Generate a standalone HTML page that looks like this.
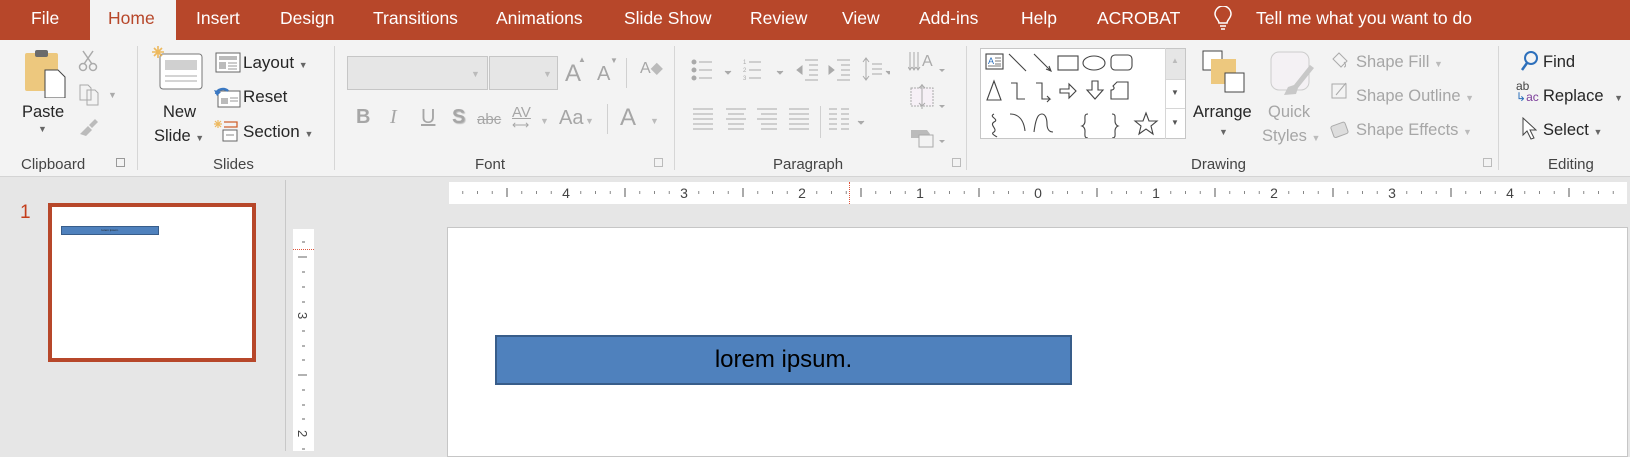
<!DOCTYPE html>
<html><head><meta charset="utf-8">
<style>
*{margin:0;padding:0;box-sizing:border-box}
body{width:1630px;height:451px;overflow:hidden;background:#e6e6e6;font-family:"Liberation Sans",sans-serif;position:relative}
.a{position:absolute;white-space:nowrap}
.tab{position:absolute;top:0;height:40px;line-height:36px;color:#fff;font-size:17.5px}
.t{position:absolute;font-size:16.5px;color:#262626;white-space:nowrap;line-height:18px}
.g{color:#a6a6a6}
.lbl{position:absolute;top:156px;font-size:15px;color:#444;white-space:nowrap}
.sep{position:absolute;top:46px;width:1px;height:124px;background:#d6d6d6}
.ar{font-size:9px;color:#666}
</style></head><body>
<!-- tab bar -->
<div class="a" style="left:0;top:0;width:1630px;height:40px;background:#b7472a"></div>
<div class="a" style="left:90px;top:0;width:86px;height:41px;background:#f3f3f3"></div>
<div class="tab" style="left:31px">File</div>
<div class="tab" style="left:108px;color:#b7472a">Home</div>
<div class="tab" style="left:196px">Insert</div>
<div class="tab" style="left:280px">Design</div>
<div class="tab" style="left:373px">Transitions</div>
<div class="tab" style="left:496px">Animations</div>
<div class="tab" style="left:624px">Slide Show</div>
<div class="tab" style="left:750px">Review</div>
<div class="tab" style="left:842px">View</div>
<div class="tab" style="left:919px">Add-ins</div>
<div class="tab" style="left:1021px">Help</div>
<div class="tab" style="left:1097px">ACROBAT</div>
<svg class="a" style="left:1214px;top:6px" width="18" height="26" viewBox="0 0 18 26"><path d="M5 17c0-3-4-5-4-9a8 8 0 0 1 16 0c0 4-4 6-4 9z M6 20h6 M7 23h4" fill="none" stroke="#fff" stroke-width="1.5"/></svg>
<div class="tab" style="left:1256px">Tell me what you want to do</div>

<!-- ribbon -->
<div class="a" style="left:0;top:40px;width:1630px;height:137px;background:#f3f3f3;border-bottom:1px solid #d4d4d4"></div>
<div class="sep" style="left:137px"></div>
<div class="sep" style="left:334px"></div>
<div class="sep" style="left:674px"></div>
<div class="sep" style="left:966px"></div>
<div class="sep" style="left:1498px"></div>

<!-- clipboard -->
<svg class="a" style="left:24px;top:48px" width="44" height="50"><rect x="1" y="5" width="33" height="38" rx="2" fill="#edc87e"/><rect x="11" y="2" width="13" height="7" rx="2" fill="#6b6b6b"/><path d="M21 22h13l7 7v21H21z" fill="#fff" stroke="#444"/></svg>
<div class="t" style="left:22px;top:103px">Paste</div>
<div class="a ar" style="left:38px;top:124px">▼</div>
<svg class="a" style="left:78px;top:50px" width="20" height="22"><circle cx="5" cy="17" r="3.5" fill="none" stroke="#aaa" stroke-width="1.5"/><circle cx="15" cy="17" r="3.5" fill="none" stroke="#aaa" stroke-width="1.5"/><path d="M6 14L15 1M14 14L5 1" stroke="#aaa" stroke-width="1.5"/></svg>
<svg class="a" style="left:79px;top:84px" width="22" height="22"><path d="M1 1h8l3 3v12H1z M8 6h8l3 3v12H8z" fill="#f3f3f3" stroke="#aaa"/></svg>
<div class="a ar" style="left:108px;top:90px;color:#aaa">▼</div>
<svg class="a" style="left:78px;top:118px" width="22" height="18"><path d="M2 16l8-8 4 4-6 6z M11 7l6-6 3 3-6 6z" fill="#bbb"/></svg>
<div class="lbl" style="left:21px">Clipboard</div>
<div class="a" style="left:116px;top:158px;width:9px;height:9px;border:1px solid #999"></div>

<!-- slides -->
<svg class="a" style="left:152px;top:46px" width="52" height="46"><rect x="8" y="8" width="42" height="35" rx="3" fill="#fff" stroke="#777"/><rect x="13" y="14" width="32" height="10" fill="#d0d0d0"/><path d="M13 30h32M13 35h32" stroke="#aaa"/><path d="M6 0v12M0 6h12M2 2l8 8M10 2l-8 8" stroke="#edb95e" stroke-width="1.6"/></svg>
<div class="t" style="left:163px;top:103px">New</div>
<div class="t" style="left:154px;top:127px">Slide <span class="ar">▼</span></div>
<svg class="a" style="left:215px;top:52px" width="26" height="21"><rect x="1" y="1" width="24" height="19" fill="#fff" stroke="#666"/><rect x="4" y="4" width="18" height="4" fill="#bbb"/><rect x="4" y="10" width="7" height="7" fill="#bbb"/><path d="M13 11h9M13 14h9M13 17h9" stroke="#999"/></svg>
<div class="t" style="left:243px;top:54px;font-size:17px">Layout <span class="ar">▼</span></div>
<svg class="a" style="left:214px;top:86px" width="28" height="22"><rect x="4" y="5" width="22" height="16" fill="#fff" stroke="#666"/><rect x="7" y="12" width="7" height="6" fill="#bbb"/><path d="M16 12h8M16 15h8" stroke="#999"/><path d="M2 8a7 6 0 0 1 12-3" fill="none" stroke="#3a78c2" stroke-width="2.5"/><path d="M0 4l3 6 4-4z" fill="#3a78c2"/></svg>
<div class="t" style="left:243px;top:88px;font-size:17px">Reset</div>
<svg class="a" style="left:214px;top:119px" width="28" height="24"><path d="M4 1v8M0 5h8M1 2l6 6M7 2L1 8" stroke="#edb95e" stroke-width="1.2"/><path d="M10 3h13v5H10" fill="none" stroke="#d0612d" stroke-width="1.3"/><rect x="9" y="11" width="14" height="11" fill="#fff" stroke="#666"/><path d="M12 16h8" stroke="#888"/></svg>
<div class="t" style="left:243px;top:123px;font-size:17px">Section <span class="ar">▼</span></div>
<div class="lbl" style="left:213px">Slides</div>

<!-- font -->
<div class="a" style="left:347px;top:56px;width:141px;height:34px;background:#e6e6e6;border:1px solid #c6c6c6"></div>
<div class="a" style="left:489px;top:56px;width:69px;height:34px;background:#e6e6e6;border:1px solid #c6c6c6"></div>
<div class="a ar" style="left:471px;top:69px;color:#bbb">▼</div>
<div class="a ar" style="left:543px;top:69px;color:#bbb">▼</div>
<div class="a g" style="left:565px;top:60px;font-size:24px">A</div><div class="a g" style="left:578px;top:55px;font-size:8px">▲</div>
<div class="a g" style="left:597px;top:63px;font-size:20px">A</div><div class="a g" style="left:610px;top:56px;font-size:8px">▼</div>
<div class="a" style="left:626px;top:58px;width:1px;height:30px;background:#d0d0d0"></div>
<div class="a g" style="left:640px;top:58px;font-size:16px">A<span style="color:#bbb">◆</span></div>
<div class="a g" style="left:356px;top:106px;font-size:20px;font-weight:bold">B</div>
<div class="a g" style="left:390px;top:106px;font-size:20px;font-style:italic;font-family:'Liberation Serif',serif">I</div>
<div class="a g" style="left:421px;top:106px;font-size:20px;text-decoration:underline">U</div>
<div class="a g" style="left:452px;top:106px;font-size:20px;font-weight:bold;text-shadow:1px 1px 1px #bbb">S</div>
<div class="a g" style="left:477px;top:111px;font-size:15px;text-decoration:line-through">abc</div>
<div class="a g" style="left:512px;top:104px;font-size:15px;text-decoration:underline">AV</div><div class="a g" style="left:512px;top:118px;font-size:12px">⟷</div>
<div class="a ar" style="left:540px;top:116px;color:#bbb">▼</div>
<div class="a g" style="left:559px;top:107px;font-size:20px">Aa</div><div class="a ar" style="left:585px;top:116px;color:#bbb">▼</div>
<div class="a" style="left:607px;top:104px;width:1px;height:30px;background:#d0d0d0"></div>
<div class="a g" style="left:620px;top:104px;font-size:24px">A</div><div class="a ar" style="left:650px;top:116px;color:#bbb">▼</div>
<div class="lbl" style="left:475px">Font</div>
<div class="a" style="left:654px;top:158px;width:9px;height:9px;border:1px solid #bbb"></div>

<!-- paragraph -->
<svg class="a" style="left:690px;top:56px" width="200" height="90" stroke="#aaa" fill="none">
<g><circle cx="4" cy="6" r="2" fill="#aaa"/><circle cx="4" cy="14" r="2" fill="#aaa"/><circle cx="4" cy="22" r="2" fill="#aaa"/><path d="M9 6h13M9 14h13M9 22h13"/></g>
<path d="M35 15l3 3 3-3" fill="#aaa"/>
<g transform="translate(53 0)" font-size="6" font-family="Liberation Sans"><text x="0" y="8" fill="#aaa" stroke="none">1</text><text x="0" y="16" fill="#aaa" stroke="none">2</text><text x="0" y="24" fill="#aaa" stroke="none">3</text><path d="M6 6h12M6 14h12M6 22h12"/></g>
<path d="M87 15l3 3 3-3" fill="#aaa"/>
<g transform="translate(107 2)"><path d="M8 2h13M12 7h9M12 12h9M12 17h9M8 22h13M0 12l5-4v8z" fill="#aaa"/></g>
<g transform="translate(139 2)"><path d="M8 2h13M12 7h9M12 12h9M12 17h9M8 22h13M0 8l5 4-5 4z" fill="#aaa"/></g>
<g transform="translate(172 0)"><path d="M4 3v20M1 6l3-4 3 4M1 20l3 4 3-4M10 8h10M10 13h10M10 18h10"/></g>
<path d="M196 15l3 3 3-3" fill="#aaa"/>
<g transform="translate(0 53)"><path d="M3 0h20M3 5h20M3 10h20M3 15h20M3 20h20"/><path d="M36 0h20M38 5h16M36 10h20M38 15h16M38 20h16"/><path d="M67 0h20M71 5h16M67 10h20M71 15h16M71 20h16"/><path d="M99 0h20M99 5h20M99 10h20M99 15h20M99 20h20"/><path d="M130.5 -3v32" stroke="#d0d0d0"/><path d="M139 0h8M139 5h8M139 10h8M139 15h8M139 20h8M151 0h8M151 5h8M151 10h8M151 15h8M151 20h8"/><path d="M168 12l3 3 3-3" fill="#aaa"/></g>
</svg>
<svg class="a" style="left:908px;top:50px" width="40" height="100" stroke="#aaa" fill="none"><path d="M2 2v18M6 2v18M10 2v18M0 17l2 3 2-3M4 17l2 3 2-3M8 17l2 3 2-3"/><text x="14" y="16" font-size="16" fill="#aaa" stroke="none" font-family="Liberation Sans">A</text><path d="M31 19l3 3 3-3M31 55l3 3 3-3M31 90l3 3 3-3" fill="#aaa" stroke="none"/><rect x="3" y="38" width="22" height="18" fill="#f6f0f6" stroke-dasharray="2 1"/><path d="M14 34v25M11 38l3-3 3 3M11 53l3 3 3-3"/><path d="M3 80h16l3 4-3 4H3z" fill="#bbb" stroke="none"/><rect x="11" y="85" width="14" height="12" fill="#f3f3f3"/></svg>
<div class="lbl" style="left:773px">Paragraph</div>
<div class="a" style="left:952px;top:158px;width:9px;height:9px;border:1px solid #bbb"></div>

<!-- drawing -->
<div class="a" style="left:980px;top:48px;width:206px;height:91px;background:#fff;border:1px solid #c6c6c6"></div>
<div class="a" style="left:1165px;top:48px;width:21px;height:91px;border-left:1px solid #d6d6d6"></div>
<div class="a" style="left:1166px;top:49px;width:19px;height:30px;background:#e6e6e6"></div>
<div class="a" style="left:1166px;top:79px;width:19px;height:1px;background:#d6d6d6"></div>
<div class="a" style="left:1166px;top:108px;width:19px;height:1px;background:#d6d6d6"></div>
<div class="a" style="left:1171px;top:56px;font-size:8px;color:#bbb">▲</div>
<div class="a" style="left:1171px;top:88px;font-size:8px;color:#555">▼</div>
<div class="a" style="left:1171px;top:118px;font-size:8px;color:#555">▼</div>
<svg class="a" style="left:984px;top:52px" width="180" height="86" fill="none" stroke="#444" stroke-width="1.1">
<rect x="2" y="2" width="17" height="15"/><text x="4" y="12" font-size="9" fill="#2c6fbb" stroke="none" font-family="Liberation Sans">A</text><path d="M11 6h6M11 9h6M11 12h6M4 14h13" stroke="#777"/>
<path d="M25 2l17 17M50 2l17 17M65 14l2 5-5-2"/>
<rect x="74" y="4" width="20" height="14"/><ellipse cx="110" cy="11" rx="11" ry="7"/><rect x="127" y="3" width="21" height="15" rx="4"/>
<path d="M10 29L3 48h14z M27 31h6v16h8 M52 31h6v16h8l-3-3m3 3l-3 3 M76 37h9v-5l7 7-7 7v-5h-9z M108 29h6v9h5l-8 9-8-9h5z M129 34l4-4h11v17h-17v-9c3 0 4-2 2-4z"/>
<path d="M10 62c-6 3 6 5 0 8-5 3 4 7 0 10-4 2 2 4 3 5 M26 62c10 0 14 8 15 17 M50 80c2-16 5-18 8-18s5 4 5 10 3 8 6 8 M104 62c-4 0-3 3-3 7s-3 5-3 5c0 0 3 1 3 5s-1 7 3 7 M128 62c4 0 3 3 3 7s3 5 3 5c0 0-3 1-3 5s1 7-3 7 M162 61l3 8h8l-6 5 2 8-7-5-7 5 2-8-6-5h8z"/>
</svg>
<svg class="a" style="left:1202px;top:50px" width="44" height="44"><rect x="1" y="1" width="19" height="19" fill="#fff" stroke="#444"/><rect x="9" y="9" width="25" height="25" fill="#edc87e"/><rect x="23" y="23" width="19" height="19" fill="#fff" stroke="#444"/></svg>
<div class="t" style="left:1193px;top:103px">Arrange</div>
<div class="a ar" style="left:1219px;top:127px">▼</div>
<svg class="a" style="left:1270px;top:51px" width="48" height="46"><rect x="1" y="1" width="38" height="38" rx="8" fill="#f4f1f4" stroke="#ccc"/><path d="M14 44l4-8 6-2 16-20 4 3-16 20-2 6z" fill="#c8c8c8"/></svg>
<div class="t g" style="left:1268px;top:103px">Quick</div>
<div class="t g" style="left:1262px;top:127px">Styles <span class="ar" style="color:#bbb">▼</span></div>
<svg class="a" style="left:1330px;top:50px" width="20" height="90" fill="none" stroke="#aaa"><path d="M3 9l6-6 8 8-6 6z M14 12c2 2 2 5 0 5"/><path d="M2 34h14v14H2z M6 45l10-12" /><rect x="2" y="74" width="15" height="12" rx="2" transform="rotate(-20 9 80)" fill="#ddd"/></svg>
<div class="t g" style="left:1356px;top:53px">Shape Fill <span class="ar" style="color:#bbb">▼</span></div>
<div class="t g" style="left:1356px;top:87px">Shape Outline <span class="ar" style="color:#bbb">▼</span></div>
<div class="t g" style="left:1356px;top:121px">Shape Effects <span class="ar" style="color:#bbb">▼</span></div>
<div class="lbl" style="left:1191px">Drawing</div>
<div class="a" style="left:1483px;top:158px;width:9px;height:9px;border:1px solid #bbb"></div>

<!-- editing -->
<svg class="a" style="left:1520px;top:50px" width="20" height="22"><circle cx="11" cy="8" r="6" fill="none" stroke="#2c6fbb" stroke-width="2"/><path d="M7 13l-5 7" stroke="#2c6fbb" stroke-width="2.5"/></svg>
<div class="t" style="left:1543px;top:53px">Find</div>
<div class="a" style="left:1516px;top:81px;font-size:12px;color:#444;line-height:11px">ab<br><span style="color:#2c6fbb">↳</span><span style="color:#7c3d9a">ac</span></div>
<div class="t" style="left:1543px;top:87px">Replace <span class="ar" style="margin-left:6px">▼</span></div>
<svg class="a" style="left:1521px;top:116px" width="16" height="24"><path d="M2 2v17l4-4 4 8 3-1-4-8h6z" fill="#fff" stroke="#444"/></svg>
<div class="t" style="left:1543px;top:121px">Select <span class="ar">▼</span></div>
<div class="lbl" style="left:1548px">Editing</div>

<!-- left pane -->
<div class="a" style="left:285px;top:180px;width:1px;height:271px;background:#c8c8c8"></div>
<div class="a" style="left:20px;top:202px;font-size:19px;color:#c43e1c">1</div>
<div class="a" style="left:48px;top:203px;width:208px;height:159px;border:4px solid #b7472a;background:#fff"></div>
<div class="a" style="left:61px;top:226px;width:98px;height:9px;background:#4f81bd;border:1px solid #385d8a;font-size:3px;color:#222;text-align:center;line-height:7px">lorem ipsum.</div>

<!-- horizontal ruler -->
<div class="a" style="left:449px;top:182px;width:1178px;height:22px;background:#fff"></div>
<svg class="a" style="left:449px;top:182px" width="1178" height="22" id="hr"></svg>
<div class="a" style="left:849px;top:182px;height:22px;border-left:1px dotted #e0533a"></div>

<!-- vertical ruler -->
<div class="a" style="left:293px;top:229px;width:21px;height:222px;background:#fff"></div>
<div class="a" style="left:293px;top:249px;width:21px;border-top:1px dotted #e0533a"></div>
<svg class="a" style="left:293px;top:229px" width="21" height="222" stroke="#666">
<path d="M9 13h3M5 28h9M9 43h3M9 58h3M9 73h3M9 102h3M9 117h3M9 131h3M5 146h9M9 161h3M9 176h3M9 190h3M9 220h3"/>
<text x="0" y="0" transform="translate(5 83) rotate(90)" font-size="13" fill="#444" stroke="none" font-family="Liberation Sans">3</text>
<text x="0" y="0" transform="translate(5 201) rotate(90)" font-size="13" fill="#444" stroke="none" font-family="Liberation Sans">2</text>
</svg>

<!-- slide -->
<div class="a" style="left:447px;top:227px;width:1181px;height:230px;background:#fff;border:1px solid #c6c6c6"></div>
<div class="a" style="left:495px;top:335px;width:577px;height:50px;background:#4f81bd;border:2px solid #385d8a;text-align:center;line-height:46px;font-size:24px;color:#000">lorem ipsum.</div>

<script>
(function(){var s=document.getElementById('hr'),h='';var z=1038-449,u=118;
for(var i=-13*8;i<=13*8;i++){var x=z+i*u/8;if(x<4||x>1174)continue;
if(i%8==0){h+='<text x="'+x+'" y="16" font-size="14" fill="#444" text-anchor="middle" font-family="Liberation Sans">'+Math.abs(i/8)+'</text>';}
else if(i%4==0){h+='<path d="M'+x+' 6v9" stroke="#555"/>';}
else h+='<path d="M'+x+' 9v3" stroke="#888"/>';}
s.innerHTML=h;})();
</script>
</body></html>
